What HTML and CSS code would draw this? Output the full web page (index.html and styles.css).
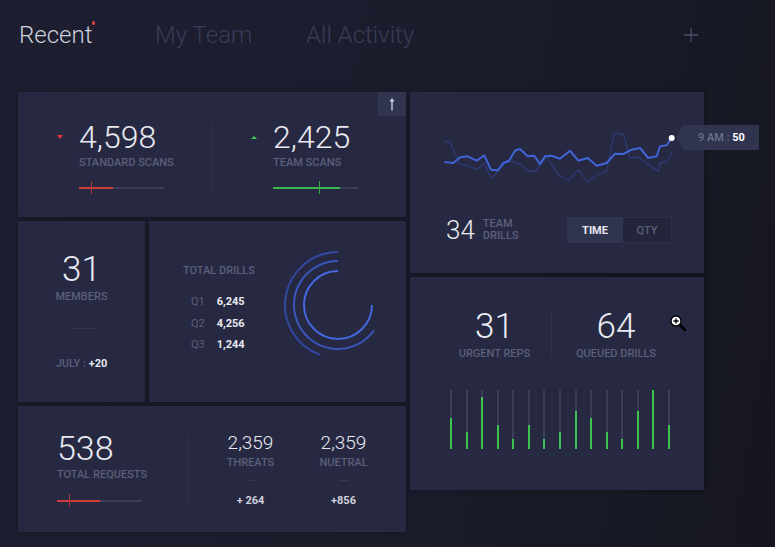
FILE: index.html
```html
<!DOCTYPE html>
<html lang="en">
<head>
<meta charset="utf-8">
<title>Dashboard</title>
<link rel="stylesheet" href="styles.css">
</head>
<body>
<nav class="nav">
  <div class="tab tab-active"><span class="tab-text">Recent<i class="dot"></i></span></div>
  <div class="tab">My Team</div>
  <div class="tab">All Activity</div>
  <svg class="plus" width="14" height="14" viewBox="0 0 14 14"><path d="M7 0V14M0 7H14" stroke="#4b4e69" stroke-width="1.3" fill="none"/></svg>
</nav>

<main class="dash">
  <div class="col">
    <section class="card scans">
      <div class="stat">
        <span class="tri tri-down"></span>
        <div class="stat-body">
          <div class="big">4,598</div>
          <div class="label">STANDARD SCANS</div>
          <div class="meter"><div class="meter-fill red" style="width:40%"></div><i class="meter-tick red" style="left:14%"></i></div>
        </div>
      </div>
      <div class="vdiv scans-div"></div>
      <div class="stat stat-right">
        <span class="tri tri-up"></span>
        <div class="stat-body">
          <div class="big">2,425</div>
          <div class="label">TEAM SCANS</div>
          <div class="meter"><div class="meter-fill green" style="width:79%"></div><i class="meter-tick green" style="left:54%"></i></div>
        </div>
      </div>
      <button class="up-btn" type="button" aria-label="Up">
        <svg width="8" height="13" viewBox="0 0 8 13"><path d="M4 12.5V1.5M2.2 3.6L4 1.2 5.8 3.6" stroke="#c9cbd8" stroke-width="1.4" fill="none"/></svg>
      </button>
    </section>

    <div class="mid">
      <section class="card members">
        <div class="big35">31</div>
        <div class="label">MEMBERS</div>
        <div class="short-rule"></div>
        <div class="label july">JULY : <b class="val">+20</b></div>
      </section>
      <section class="card drills">
        <div class="drills-text">
          <div class="label">TOTAL DRILLS</div>
          <div class="q-list">
            <span class="q">Q1</span><b class="val">6,245</b>
            <span class="q">Q2</span><b class="val">4,256</b>
            <span class="q">Q3</span><b class="val">1,244</b>
          </div>
        </div>
        <svg class="rings" width="110" height="110" viewBox="0 0 110 110">
          <path d="M55 2 A53 53 0 0 0 36.9 104.8" stroke="#3248a0" stroke-width="2" fill="none"/>
          <path d="M55 11 A44 44 0 1 0 91 80.2" stroke="#3a56bb" stroke-width="2" fill="none"/>
          <path d="M55 21 A34 34 0 1 0 89 55" stroke="#4469e0" stroke-width="2" fill="none"/>
        </svg>
      </section>
    </div>

    <section class="card requests">
      <div class="req-main">
        <div class="big34">538</div>
        <div class="label">TOTAL REQUESTS</div>
        <div class="meter req-meter"><div class="meter-fill red" style="width:51%"></div><i class="meter-tick red" style="left:14%"></i></div>
      </div>
      <div class="vdiv req-div"></div>
      <div class="req-pair">
        <div class="req-col">
          <div class="mid-num">2,359</div>
          <div class="label">THREATS</div>
          <div class="tiny-rule"></div>
          <b class="val req-val">+ 264</b>
        </div>
        <div class="req-col">
          <div class="mid-num">2,359</div>
          <div class="label">NUETRAL</div>
          <div class="tiny-rule"></div>
          <b class="val req-val">+856</b>
        </div>
      </div>
    </section>
  </div>

  <div class="col">
    <section class="card chart">
      <svg class="lines" width="240" height="60" viewBox="0 0 240 60">
        <polyline fill="none" stroke="#2d3a72" stroke-width="1.4" stroke-linejoin="round" points="4.3,16.3 10,17 15,28 20,39.7 28.3,40.3 36.7,44.7 44.3,38 51,53 56.7,48 65,38 71.7,36.3 80,39 88.3,46.3 95,46.3 101.7,38 106.7,31.3 111.7,39.7 118.3,49.7 128.3,55.7 138.3,44.7 147.7,57 156.7,49.7 166.7,46.3 174.3,8 183.3,9 190,33 198.3,32.3 208.3,39.7 218.3,46.3 220,38 226.7,36.3 232.7,26.3"/>
        <polyline fill="none" stroke="#4064d8" stroke-width="2" stroke-linejoin="round" points="4.3,37 13.3,38 20,32.3 27.7,31.3 36.7,35.7 44.3,30.3 51,44.7 57.7,45.3 63.3,38 69,35.7 75,25.7 80,24 87.7,31.3 94.3,30.7 100,39 105,31.3 111.7,30.7 120,33.7 130,25.7 138.3,35.7 147.7,33 156.7,40.7 166.7,38 175,28.7 183.3,29 191.7,24.7 200,23 208.3,33 216.7,31.3 220,21.3 226.7,20.3 231.7,13"/>
        <circle cx="231.7" cy="13" r="3" fill="#ffffff"/>
      </svg>
      <div class="tooltip">9 AM : <b class="val">50</b></div>
      <div class="chart-foot">
        <div class="big26">34</div>
        <div class="label team-label">TEAM<br>DRILLS</div>
        <div class="toggle">
          <span class="seg seg-on">TIME</span>
          <span class="seg seg-off">QTY</span>
        </div>
      </div>
    </section>

    <section class="card reps">
      <div class="reps-stats">
        <div class="reps-col">
          <div class="big35">31</div>
          <div class="label">URGENT REPS</div>
        </div>
        <div class="vdiv reps-div"></div>
        <div class="reps-col">
          <div class="big35">64</div>
          <div class="label">QUEUED DRILLS</div>
        </div>
      </div>
      <div class="bars">
        <div class="bar"><div class="bar-fill" style="height:52%"></div></div>
        <div class="bar"><div class="bar-fill" style="height:29%"></div></div>
        <div class="bar"><div class="bar-fill" style="height:89%"></div></div>
        <div class="bar"><div class="bar-fill" style="height:41%"></div></div>
        <div class="bar"><div class="bar-fill" style="height:17%"></div></div>
        <div class="bar"><div class="bar-fill" style="height:41%"></div></div>
        <div class="bar"><div class="bar-fill" style="height:17%"></div></div>
        <div class="bar"><div class="bar-fill" style="height:29%"></div></div>
        <div class="bar"><div class="bar-fill" style="height:64%"></div></div>
        <div class="bar"><div class="bar-fill" style="height:52%"></div></div>
        <div class="bar"><div class="bar-fill" style="height:29%"></div></div>
        <div class="bar"><div class="bar-fill" style="height:17%"></div></div>
        <div class="bar"><div class="bar-fill" style="height:64%"></div></div>
        <div class="bar"><div class="bar-fill" style="height:100%"></div></div>
        <div class="bar"><div class="bar-fill" style="height:41%"></div></div>
      </div>
      <svg class="cursor" width="17" height="17" viewBox="0 0 17 17">
        <path d="M9.6 9.6L15 15" stroke="#000" stroke-width="2.6" stroke-linecap="round"/>
        <circle cx="6" cy="6" r="5" fill="#fff" stroke="#000" stroke-width="1.3"/>
        <path d="M6 3.4V8.6M3.4 6H8.6" stroke="#000" stroke-width="1.4"/>
      </svg>
    </section>
  </div>
</main>
</body>
</html>
```

FILE: styles.css
```css
html, body {
  margin: 0;
  padding: 0;
}
body {
  width: 775px;
  height: 547px;
  overflow: hidden;
  background: linear-gradient(100deg, #1d1f31 0%, #1b1d2d 50%, #15161f 100%);
  font-family: Roboto, "Noto Sans", sans-serif;
  color: #e8e9f0;
}

/* top navigation */
.nav {
  display: grid;
  grid-template-columns: 136px 151px 1fr auto;
  align-items: start;
  height: 92px;
  box-sizing: border-box;
  padding: 21px 77px 0 19px;
}
.tab {
  font-size: 24px;
  font-weight: 300;
  line-height: 28px;
  color: #393c56;
}
.tab-active {
  color: #cfd1dc;
}
.tab-text {
  position: relative;
}
.dot {
  position: absolute;
  right: -3px;
  top: 0;
  width: 3.5px;
  height: 3.5px;
  border-radius: 50%;
  background: #e2403f;
}
.plus {
  margin-top: 7px;
}

/* grid */
.dash {
  display: grid;
  grid-template-columns: 388px 294px;
  column-gap: 4px;
  padding-left: 18px;
}
.col {
  display: flex;
  flex-direction: column;
  gap: 4px;
}
.card {
  position: relative;
  background: #262941;
  box-shadow: 0 0 5px rgba(0, 0, 0, 0.35);
  box-sizing: border-box;
}

/* text styles */
.big {
  font-size: 32px;
  font-weight: 300;
  line-height: 32px;
  color: #e9eaf1;
}
.big35 {
  font-size: 35px;
  font-weight: 300;
  line-height: 35px;
  color: #e9eaf1;
}
.big34 {
  font-size: 34px;
  font-weight: 300;
  line-height: 34px;
  color: #e9eaf1;
}
.big26 {
  font-size: 26px;
  font-weight: 300;
  line-height: 26px;
  color: #e9eaf1;
}
.mid-num {
  font-size: 19px;
  font-weight: 300;
  line-height: 19px;
  color: #e9eaf1;
}
.label {
  font-size: 11px;
  font-weight: 500;
  line-height: 13px;
  color: #5b5f7b;
  margin-top: 3px;
  white-space: nowrap;
}
.val {
  font-weight: 700;
  color: #e9eaf1;
}

/* meters */
.meter {
  position: relative;
  width: 85px;
  height: 2px;
  margin-top: 18px;
  background: #3a3e57;
}
.meter-fill {
  height: 2px;
}
.meter-fill.red { background: #cf3a3a; }
.meter-fill.green { background: #3bb84b; }
.meter-tick {
  position: absolute;
  top: -6px;
  width: 1px;
  height: 13px;
}
.meter-tick.red { background: #b8353a; }
.meter-tick.green { background: #36a846; }

.vdiv {
  width: 1px;
  background: #2f334b;
}

/* scans */
.scans {
  height: 125px;
  display: grid;
  grid-template-columns: 194px 1px 1fr;
  padding-top: 29px;
}
.stat {
  display: flex;
  align-items: flex-start;
  gap: 16px;
  padding-left: 39px;
}
.stat-right {
  padding-left: 38px;
}
.tri {
  width: 0;
  height: 0;
  border-left: 3.5px solid transparent;
  border-right: 3.5px solid transparent;
}
.tri-down {
  margin-top: 14px;
  border-top: 4px solid #e03a3e;
}
.tri-up {
  margin-top: 15px;
  border-bottom: 3.5px solid #3fcf52;
}
.scans-div {
  margin-top: 3px;
  height: 67px;
}
.up-btn {
  position: absolute;
  top: 0;
  right: 0;
  width: 28px;
  height: 24px;
  border: 0;
  padding: 0;
  background: #30344f;
  display: flex;
  align-items: center;
  justify-content: center;
}

/* middle row */
.mid {
  display: grid;
  grid-template-columns: 127px 257px;
  column-gap: 4px;
  height: 181px;
}
.members {
  display: flex;
  flex-direction: column;
  align-items: center;
  padding-top: 31px;
}
.short-rule {
  width: 24px;
  height: 1px;
  background: #353950;
  margin-top: 25px;
}
.july {
  margin-top: 28px;
}
.july .val {
  font-weight: 700;
}
.drills {
  display: flex;
  align-items: flex-start;
  padding-left: 34px;
}
.drills-text {
  width: 100px;
  padding-top: 40px;
}
.q-list {
  display: grid;
  grid-template-columns: 25.7px auto;
  row-gap: 8.7px;
  margin-top: 18px;
  margin-left: 8px;
  font-size: 11px;
  line-height: 13px;
}
.q {
  color: #5b5f7b;
}
.rings {
  margin-top: 29px;
}

/* requests */
.requests {
  height: 126px;
  display: grid;
  grid-template-columns: 170px 1px auto;
}
.req-main {
  padding: 25px 0 0 39px;
}
.req-meter {
  margin-top: 19px;
}
.req-div {
  margin-top: 29px;
  height: 68px;
}
.req-pair {
  display: grid;
  grid-template-columns: 93px 93px;
  padding: 27px 0 0 15px;
}
.req-col {
  display: flex;
  flex-direction: column;
  align-items: center;
}
.req-col .label {
  margin-top: 4px;
}
.tiny-rule {
  width: 10px;
  height: 1px;
  background: #34384f;
  margin-top: 11px;
}
.req-val {
  font-size: 11px;
  line-height: 13px;
  margin-top: 13px;
  color: #cfd1dc;
}

/* chart */
.chart {
  height: 181px;
  padding-top: 33px;
}
.lines {
  display: block;
  margin-left: 30px;
  overflow: visible;
}
.tooltip {
  position: absolute;
  left: 273px;
  top: 33px;
  width: 76px;
  height: 25px;
  box-sizing: border-box;
  padding-left: 15px;
  background: #30344e;
  font-size: 11px;
  font-weight: 500;
  line-height: 25px;
  color: #6d718c;
  white-space: nowrap;
}
.tooltip::before {
  content: "";
  position: absolute;
  left: -7px;
  top: 0;
  border-right: 7px solid #30344e;
  border-top: 12.5px solid transparent;
  border-bottom: 12.5px solid transparent;
}
.tooltip .val {
  color: #ffffff;
}
.chart-foot {
  display: flex;
  align-items: center;
  margin-top: 32px;
  padding: 0 32px 0 36px;
}
.team-label {
  margin: 0 0 0 8px;
  line-height: 12px;
}
.toggle {
  display: flex;
  margin-left: auto;
  height: 26px;
}
.seg {
  box-sizing: border-box;
  display: flex;
  align-items: center;
  justify-content: center;
  font-size: 11px;
  font-weight: 700;
}
.seg-on {
  width: 56px;
  background: #30344f;
  color: #e8e9f0;
}
.seg-off {
  width: 49px;
  background: #23263b;
  border: 1px solid #2d3149;
  border-left: 0;
  color: #5b5f7b;
  font-weight: 500;
}

/* reps */
.reps {
  height: 213px;
  padding-top: 32px;
}
.reps-stats {
  display: grid;
  grid-template-columns: 113px 1px 128px;
  padding-left: 28px;
}
.reps-col {
  display: flex;
  flex-direction: column;
  align-items: center;
}
.reps-div {
  margin-top: 2px;
  height: 46px;
}
.bars {
  display: flex;
  justify-content: space-between;
  width: 220px;
  height: 59px;
  margin: 30px 0 0 40px;
}
.bar {
  width: 2px;
  height: 100%;
  background: #3a3e57;
  display: flex;
  align-items: flex-end;
}
.bar-fill {
  width: 2px;
  background: #3cc24d;
}
.cursor {
  position: absolute;
  left: 260px;
  top: 38px;
}
```
